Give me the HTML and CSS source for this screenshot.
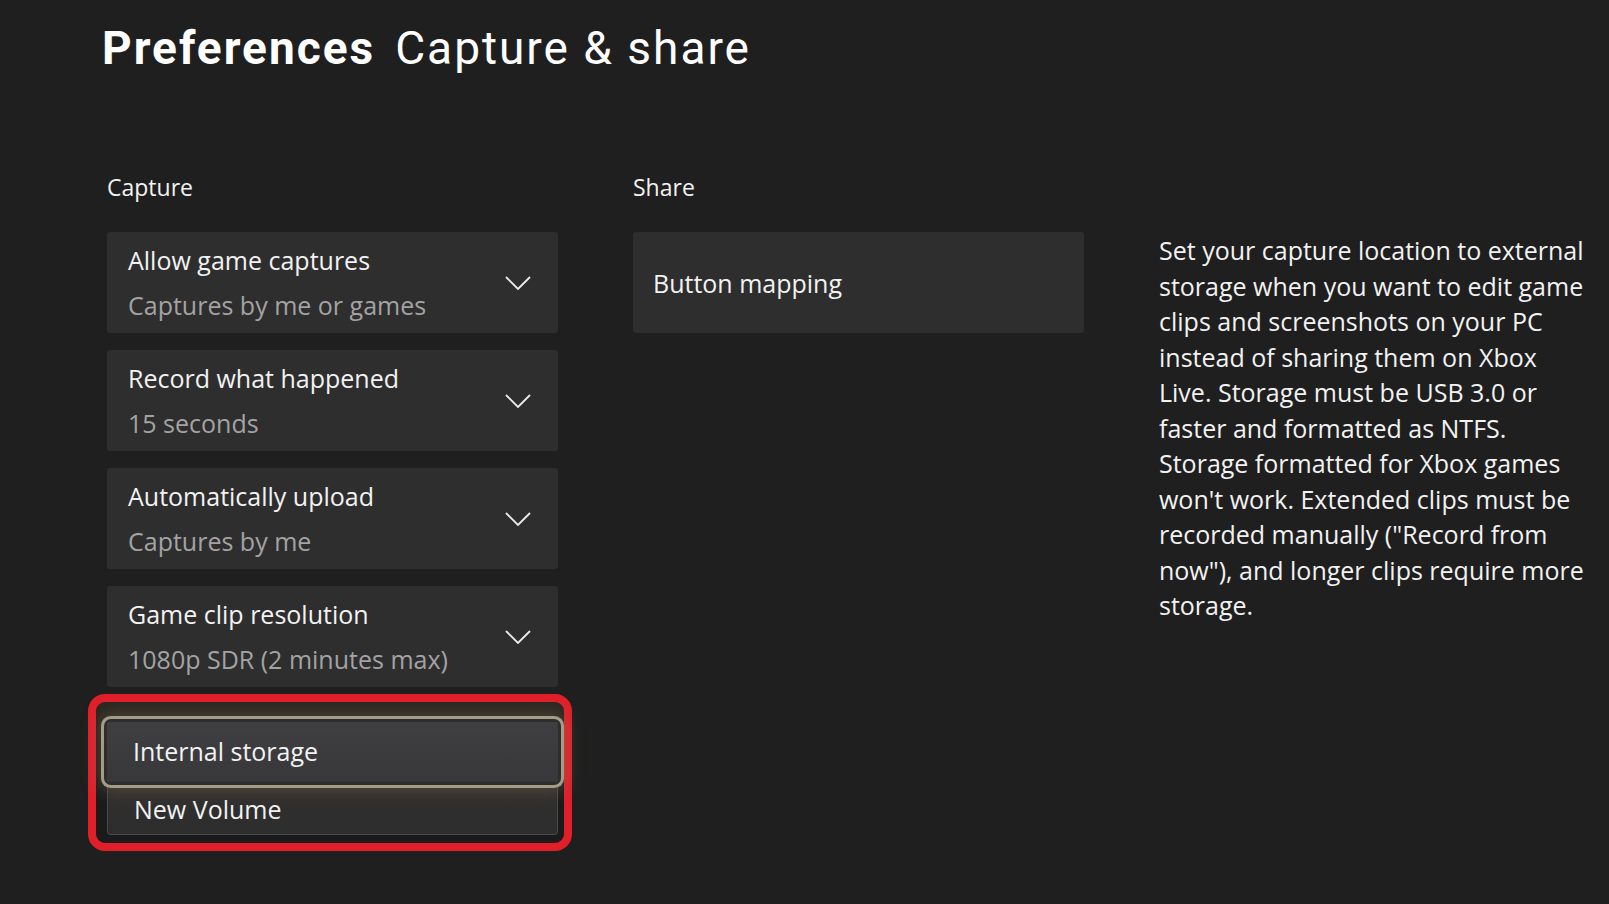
FILE: index.html
```html
<!DOCTYPE html>
<html lang="en">
<head>
    <meta charset="UTF-8">
    <meta name="viewport" content="width=device-width, initial-scale=1.0">
    <title>Capture &amp; share</title>
    <link rel="stylesheet" href="styles.css">
</head>
<body>
    <header class="page-header">
        <h1><span class="crumb">Preferences</span><span class="page-name">Capture &amp; share</span></h1>
    </header>

    <main class="columns">
        <h2 class="col-label">Capture</h2>
        <h2 class="col-label">Share</h2>
        <div></div>

        <section class="setting-list">
            <div class="setting">
                <div class="setting-text">
                    <p class="setting-name">Allow game captures</p>
                    <p class="setting-value">Captures by me or games</p>
                </div>
                <svg class="chevron" viewBox="0 0 26 14"><polyline points="1,1 13,13 25,1"/></svg>
            </div>
            <div class="setting">
                <div class="setting-text">
                    <p class="setting-name">Record what happened</p>
                    <p class="setting-value">15 seconds</p>
                </div>
                <svg class="chevron" viewBox="0 0 26 14"><polyline points="1,1 13,13 25,1"/></svg>
            </div>
            <div class="setting">
                <div class="setting-text">
                    <p class="setting-name">Automatically upload</p>
                    <p class="setting-value">Captures by me</p>
                </div>
                <svg class="chevron" viewBox="0 0 26 14"><polyline points="1,1 13,13 25,1"/></svg>
            </div>
            <div class="setting">
                <div class="setting-text">
                    <p class="setting-name">Game clip resolution</p>
                    <p class="setting-value">1080p SDR (2 minutes max)</p>
                </div>
                <svg class="chevron" viewBox="0 0 26 14"><polyline points="1,1 13,13 25,1"/></svg>
            </div>

            <!-- capture location picker, circled in red -->
            <div class="picker">
                <div class="picker-item is-focused">Internal storage</div>
                <div class="picker-item">New Volume</div>
            </div>
        </section>

        <section class="setting-list">
            <div class="setting setting-single">
                <p class="setting-name">Button mapping</p>
            </div>
        </section>

        <aside class="help">
            Set your capture location to external storage when you want to edit game clips and screenshots on your PC instead of sharing them on Xbox Live. Storage must be USB 3.0 or faster and formatted as NTFS. Storage formatted for Xbox games won't work. Extended clips must be recorded manually ("Record from now"), and longer clips require more storage.
        </aside>
    </main>
</body>
</html>
```

FILE: styles.css
```css
* {
    box-sizing: border-box;
    margin: 0;
    padding: 0;
}

body {
    background-color: #1f1f1f;
    color: #f2f2f2;
    font-family: "Open Sans", "Noto Sans", sans-serif;
    height: 100vh;
    overflow: hidden;
}

/* Title */
.page-header {
    padding: 25px 0 0 102px;
}

.page-header h1 {
    font-family: Roboto, sans-serif;
    font-size: 46px;
    line-height: 46px;
    letter-spacing: 2px;
    color: #fff;
    white-space: nowrap;
}

.crumb {
    font-weight: 700;
    margin-right: 20px;
}

.page-name {
    font-weight: 400;
}

/* Columns */
.columns {
    display: grid;
    grid-template-columns: 451px 451px 440px;
    column-gap: 75px;
    align-items: start;
    padding: 102px 0 0 107px;
}

.col-label {
    font-size: 23px;
    font-weight: 400;
    line-height: 28px;
    color: #f2f2f2;
    margin-bottom: 31px;
}

.setting-list {
    display: flex;
    flex-direction: column;
    gap: 17px;
}

.setting {
    display: flex;
    align-items: center;
    justify-content: space-between;
    height: 101px;
    padding: 0 27px 0 21px;
    background-color: #2e2e2e;
    border-radius: 3px;
}

.setting-name {
    font-size: 25px;
    line-height: 34px;
    color: #f2f2f2;
}

.setting-value {
    font-size: 25px;
    line-height: 34px;
    margin-top: 11px;
    color: #a3a3a3;
}

.setting-single {
    padding-left: 20px;
}

.chevron {
    width: 26px;
    height: 14px;
    fill: none;
    stroke: #ececec;
    stroke-width: 1.8;
}

/* Dropdown */
.picker {
    margin: -10px -14px 0 -19px;
    padding: 20px 6px 8px 11px;
    border: 8px solid #e11f2a;
    border-radius: 17px;
    background-color: #1b1b1b;
    background-image: linear-gradient(#2a2620, #1b1b1b 30%);
}

.picker-item {
    font-size: 25px;
    line-height: 34px;
    padding: 0 26px;
    color: #f2f2f2;
    border-radius: 4px;
}

.picker-item.is-focused {
    position: relative;
    z-index: 1;
    height: 60px;
    padding-top: 12px;
    background: linear-gradient(#3f3f42, #38383a);
    box-shadow:
        0 0 0 3px #2e2d2b,
        0 0 0 6px #a59c86,
        0 0 18px 8px rgba(140, 120, 90, 0.45);
}

.picker-item:not(.is-focused) {
    height: 53px;
    padding-top: 10px;
    background: linear-gradient(#2a2926, #302f2f 40%, #2d2d2d);
    border: 1px solid #4a4a4a;
    border-top: none;
}

/* Help text */
.help {
    font-size: 25px;
    line-height: 35.5px;
    color: #f2f2f2;
    margin-top: 1px;
    padding-right: 6px;
}
```
